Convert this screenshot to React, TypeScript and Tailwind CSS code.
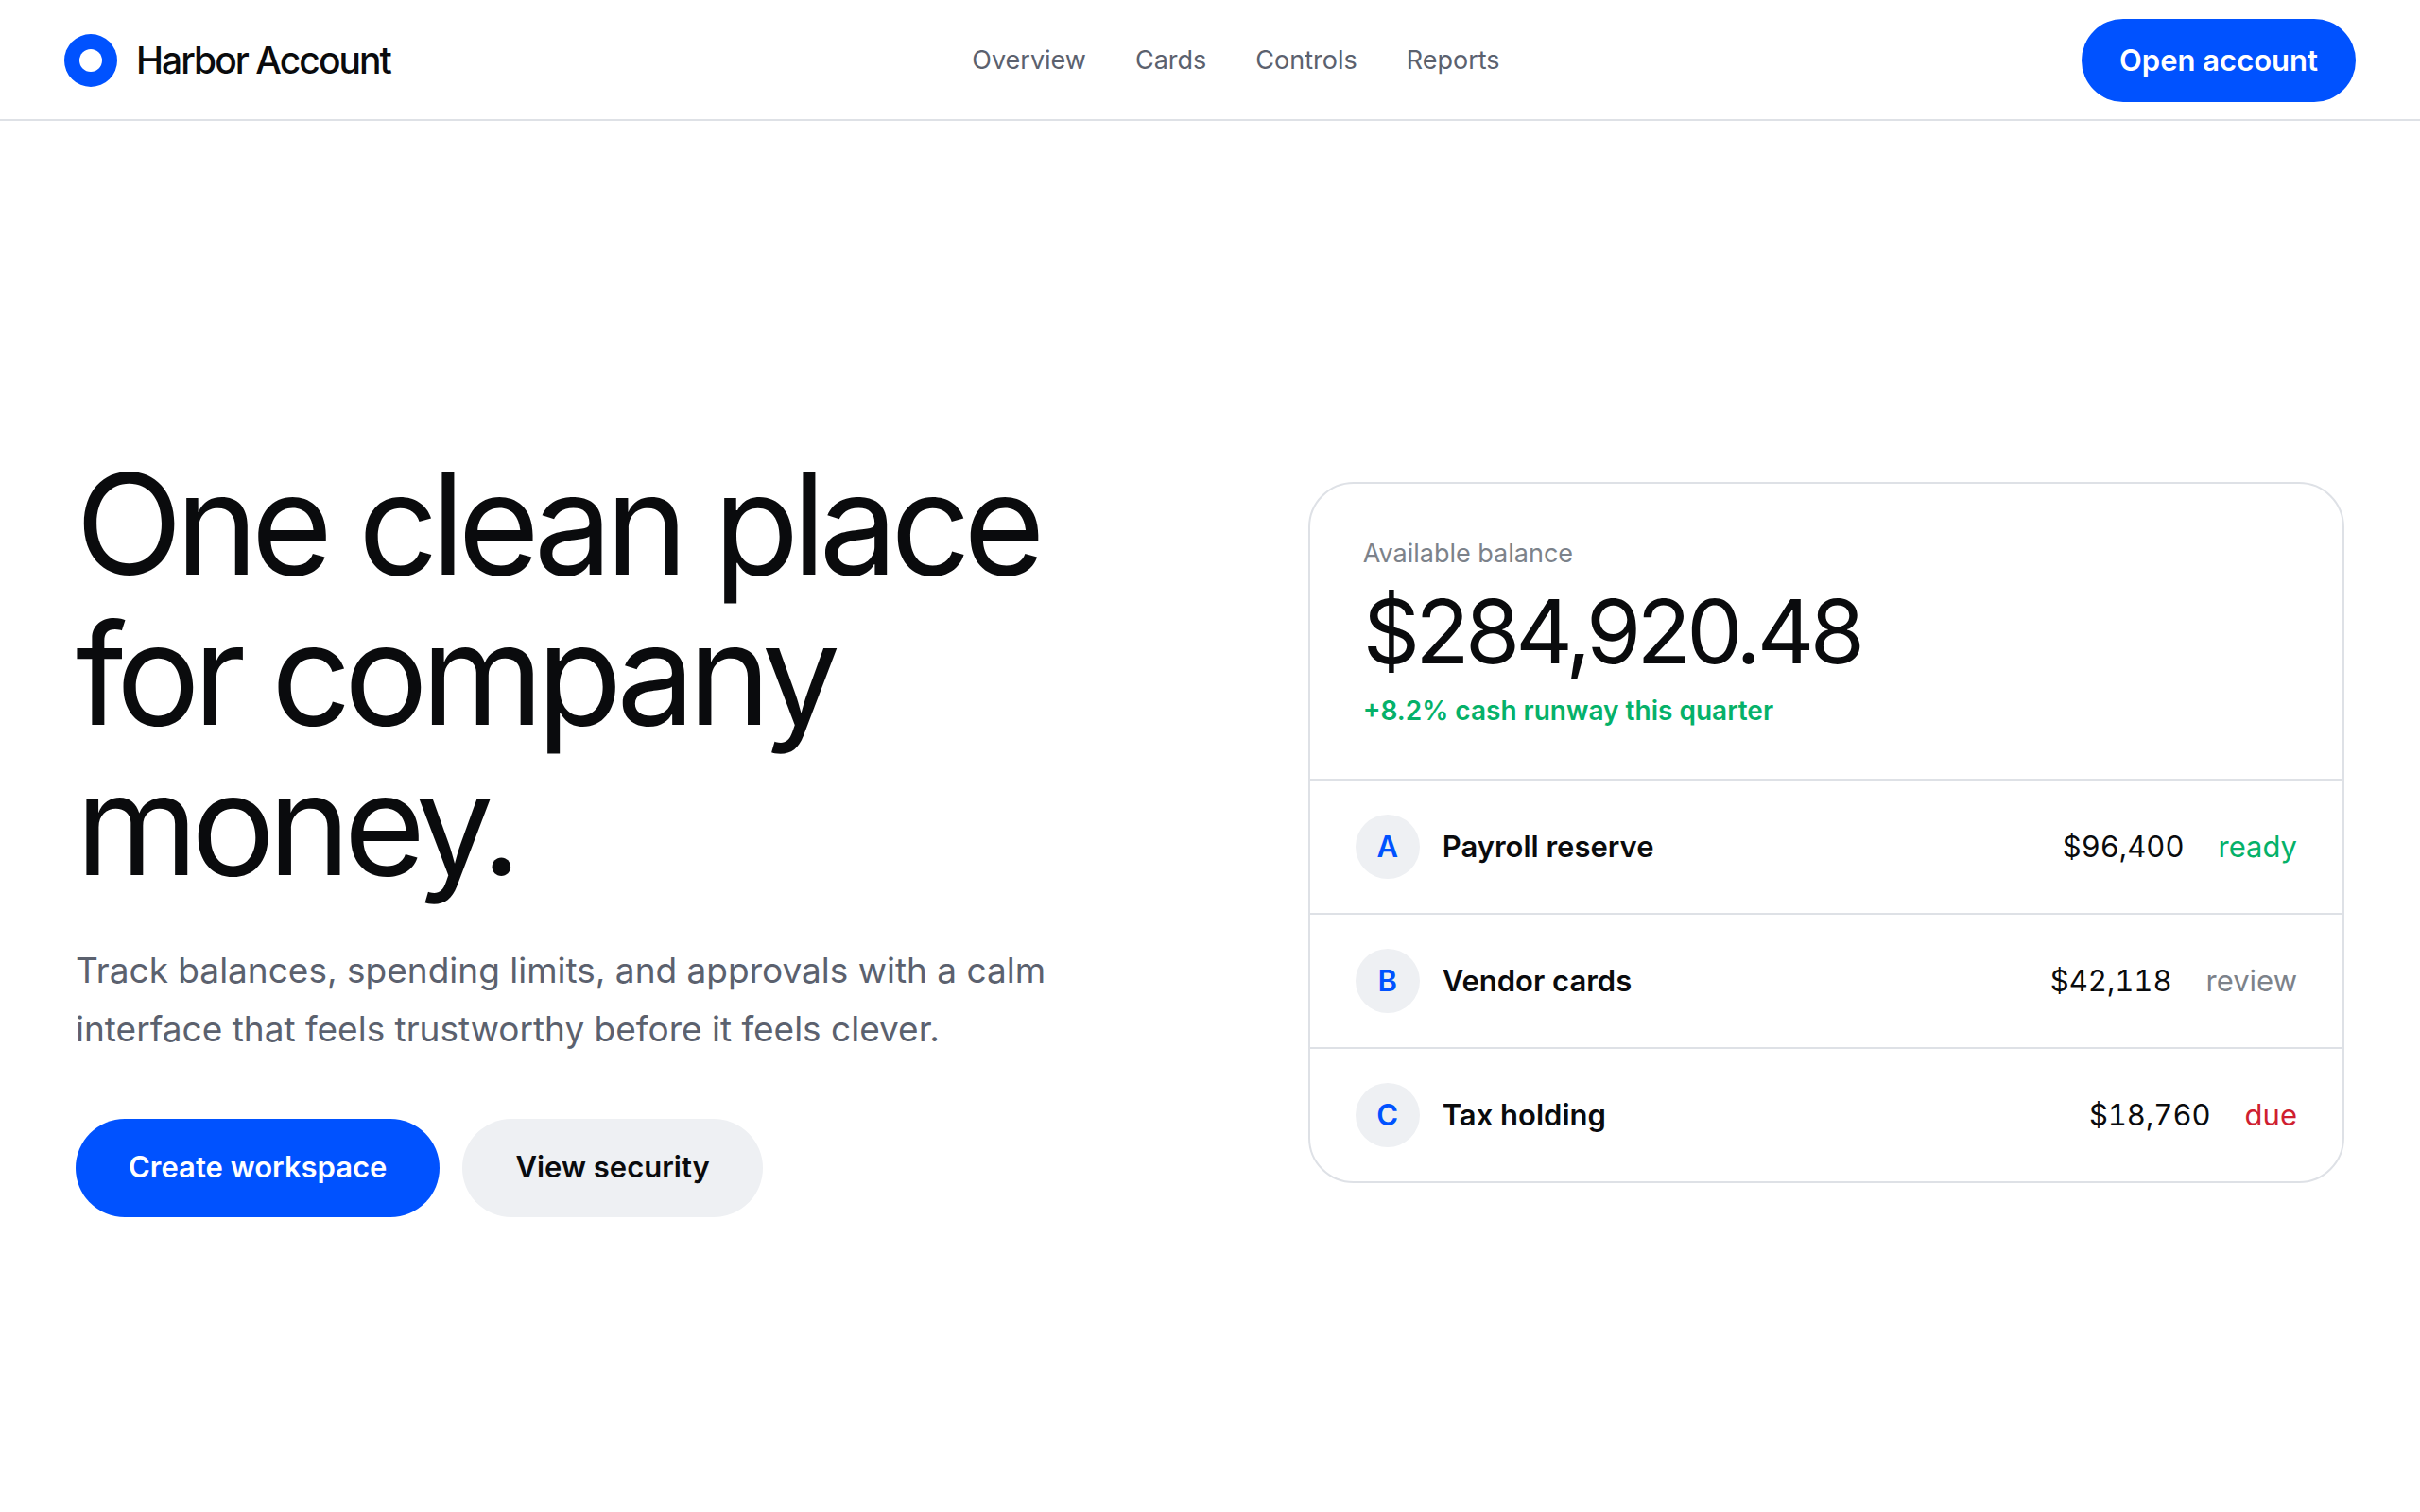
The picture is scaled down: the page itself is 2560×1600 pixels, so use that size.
import React from 'react';

interface Account {
  mark: string;
  name: string;
  amount: string;
  status: string;
  statusClass: string;
}

const navLinks = ['Overview', 'Cards', 'Controls', 'Reports'];

const accounts: Account[] = [
  { mark: 'A', name: 'Payroll reserve', amount: '$96,400', status: 'ready', statusClass: 'text-[#05b169]' },
  { mark: 'B', name: 'Vendor cards', amount: '$42,118', status: 'review', statusClass: 'text-[#7c828a]' },
  { mark: 'C', name: 'Tax holding', amount: '$18,760', status: 'due', statusClass: 'text-[#cf202f]' },
];

const Header: React.FC = () => (
  <header className="flex items-center justify-between h-32 px-[68px] pt-0.5 border-b-2 border-[#dee1e6]">
    <a href="#" className="flex items-center gap-5 text-[39px] font-medium tracking-tighter">
      <span className="flex items-center justify-center size-14 rounded-full bg-[#0052ff]">
        <span className="size-6 rounded-full bg-white" />
      </span>
      Harbor Account
    </a>
    <nav className="flex gap-[52px] text-[27px] text-[#5b616e]">
      {navLinks.map((label) => (
        <a key={label} href="#">{label}</a>
      ))}
    </nav>
    <button type="button" className="h-22 px-10 rounded-full bg-[#0052ff] text-white text-[31px] font-semibold">
      Open account
    </button>
  </header>
);

const Hero: React.FC = () => (
  <section>
    <h1 className="text-[148px] leading-[159px] tracking-tighter">
      One clean place for company money.
    </h1>
    <p className="mt-11 max-w-[1120px] text-[37px] leading-[62px] text-[#5b616e]">
      Track balances, spending limits, and approvals with a calm interface that feels trustworthy before it feels clever.
    </p>
    <div className="flex gap-6 mt-16 text-[31px] font-semibold">
      <button type="button" className="h-26 px-14 rounded-full bg-[#0052ff] text-white">Create workspace</button>
      <button type="button" className="h-26 px-14 rounded-full bg-[#eef0f3]">View security</button>
    </div>
  </section>
);

const BalanceCard: React.FC = () => (
  <section className="border-2 border-[#dee1e6] rounded-[48px] overflow-hidden">
    <div className="p-14">
      <p className="text-[27px] leading-9 text-[#7c828a]">Available balance</p>
      <p className="mt-4 mb-5 text-[94px] leading-[96px] tracking-tighter">$284,920.48</p>
      <p className="text-[28px] leading-8 font-semibold text-[#05b169]">+8.2% cash runway this quarter</p>
    </div>
    <ul>
      {accounts.map((account) => (
        <li key={account.mark} className="flex items-center gap-6 px-12 py-9 border-t-2 border-[#dee1e6] text-[31px]">
          <span className="flex items-center justify-center size-17 rounded-full bg-[#eef0f3] text-[#0052ff] font-semibold">
            {account.mark}
          </span>
          <span className="flex-1 font-semibold">{account.name}</span>
          <span className="flex gap-9">
            <span className="tabular-nums">{account.amount}</span>
            <span className={account.statusClass}>{account.status}</span>
          </span>
        </li>
      ))}
    </ul>
  </section>
);

export default function App() {
  return (
    <div className="flex flex-col min-h-screen bg-white text-[#0a0b0d] font-['Inter',sans-serif]">
      <Header />
      <main className="flex-1 grid grid-cols-[1fr_0.92fr] items-center gap-28 px-20 pt-[34px]">
        <Hero />
        <BalanceCard />
      </main>
    </div>
  );
}
